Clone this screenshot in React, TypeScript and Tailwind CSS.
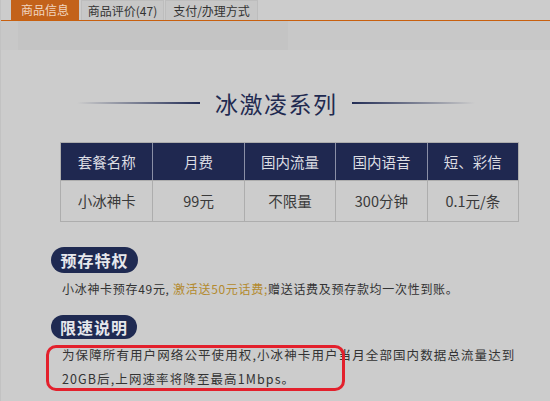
import React from 'react';

const font = { fontFamily: '"Noto Sans CJK SC", "Noto Sans", sans-serif' };

export default function App() {
    const heads = ['套餐名称', '月费', '国内流量', '国内语音', '短、彩信'];
    const cells = ['小冰神卡', '99元', '不限量', '300分钟', '0.1元/条'];

    return (
        <div className="w-[550px] h-[401px] overflow-hidden bg-[#cccccc] border-l border-[#c2c2c2] text-[#333]" style={font}>
            {/* Tabs */}
            <div className="flex items-end pl-[10px] h-[21px] border-b border-[#c8600f]">
                <div className="w-[68px] h-[20px] flex items-center justify-center bg-[#c3621a] text-[12px] text-[#f1d6c0]">商品信息</div>
                <div className="ml-[2px] w-[83px] h-[20px] flex items-center justify-center bg-[#c7c7c7] border-x border-t border-[#bdbdbd] text-[12px] text-[#333]">商品评价(47)</div>
                <div className="ml-[1px] w-[93px] h-[20px] flex items-center justify-center bg-[#c7c7c7] border-x border-t border-[#bdbdbd] text-[12px] text-[#333]">支付/办理方式</div>
            </div>

            {/* Grey strip */}
            <div className="h-[29px] bg-[#c8c8c8] pl-[17px]">
                <div className="w-[270px] h-full bg-[#c4c4c4]" />
            </div>

            {/* Title */}
            <div className="mt-[37px] flex items-center justify-center gap-[14px]">
                <div className="w-[123px] h-[2px] bg-gradient-to-r from-transparent to-[#232d55]" />
                <div className="text-[23px] leading-[32px] text-[#1f2a50] tracking-[1.5px] pl-[1.5px]">冰激凌系列</div>
                <div className="w-[123px] h-[2px] bg-gradient-to-l from-transparent to-[#232d55]" />
            </div>

            {/* Table */}
            <div className="mt-[23px] ml-[59px] w-[459px] border border-[#adadad]">
                <div className="grid grid-cols-5 bg-[#1f2850] h-[37px]">
                    {heads.map((h, i) => (
                        <div key={h} className={`flex items-center justify-center text-[14.5px] text-[#dcdde3] ${i > 0 ? 'border-l border-[#8a8fa6]' : ''}`}>{h}</div>
                    ))}
                </div>
                <div className="grid grid-cols-5 h-[41px] border-t border-[#adadad]">
                    {cells.map((c, i) => (
                        <div key={c} className={`flex items-center justify-center text-[14.5px] text-[#3a3a3a] ${i > 0 ? 'border-l border-[#adadad]' : ''}`}>{c}</div>
                    ))}
                </div>
            </div>

            {/* 预存特权 */}
            <div className="mt-[25px] ml-[50px] w-[87px] h-[26px] rounded-full bg-[#1f2a52] flex items-center justify-center text-[16px] font-bold text-[#e6e7ec] tracking-[1px]">预存特权</div>
            <div className="mt-[7px] ml-[61px] text-[12px] leading-[18px] tracking-[0.7px] text-[#333]">
                小冰神卡预存49元, <span className="text-[#b38a2e]">激活送50元话费;</span>赠送话费及预存款均一次性到账。
            </div>

            {/* 限速说明 */}
            <div className="mt-[17px] ml-[50px] w-[86px] h-[24px] rounded-full bg-[#1f2a52] flex items-center justify-center text-[16px] font-bold text-[#e6e7ec] tracking-[1px]">限速说明</div>
            <div className="relative mt-[4px] ml-[61px] w-[470px] text-[12.5px] leading-[24px] tracking-[1.1px] text-[#333]">
                为保障所有用户网络公平使用权,小冰神卡用户当月全部国内数据总流量达到20GB后,上网速率将降至最高1Mbps。
                <div className="absolute left-[-16px] top-[2px] w-[299px] h-[46px] rounded-[10px] border-[3px] border-[#e3202c]" />
            </div>
        </div>
    );
}
